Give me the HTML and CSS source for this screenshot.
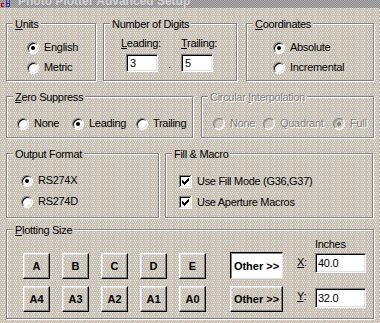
FILE: index.html
```html
<!DOCTYPE html>
<html>
<head>
<meta charset="utf-8">
<title>Photo Plotter Advanced Setup</title>
<link rel="stylesheet" href="styles.css">
</head>
<body>
<div class="titlebar">
  <svg class="appicon" width="10" height="8" viewBox="0 0 10 8">
    <path d="M0 3h3v1H1v2h2v1H0z" fill="#c00000"/>
    <path d="M5 0h1v6h2V0h1v7H5z" fill="#2040c0"/>
    <path d="M6 3h2v1H6z" fill="#c00000"/>
  </svg>
  <span class="title">Photo Plotter Advanced Setup</span>
</div>

<div class="dialog">
  <div class="row">
    <div class="group g-units">
      <span class="legend"><u>U</u>nits</span>
      <div class="opts">
        <div class="opt"><span class="radio on"></span><span>English</span></div>
        <div class="opt"><span class="radio"></span><span>Metric</span></div>
      </div>
    </div>
    <div class="group g-digits">
      <span class="legend">Number of Digits</span>
      <div class="digits">
        <div class="dcol dcol1"><span class="dlabel"><u>L</u>eading:</span><div class="field f-digit">3</div></div>
        <span class="dot">.</span>
        <div class="dcol"><span class="dlabel"><u>T</u>railing:</span><div class="field f-digit">5</div></div>
      </div>
    </div>
    <div class="group g-coords">
      <span class="legend"><u>C</u>oordinates</span>
      <div class="opts">
        <div class="opt"><span class="radio on"></span><span>Absolute</span></div>
        <div class="opt"><span class="radio"></span><span>Incremental</span></div>
      </div>
    </div>
  </div>

  <div class="row row2">
    <div class="group g-zero">
      <span class="legend"><u>Z</u>ero Suppress</span>
      <div class="hopts zero-opts">
        <div class="opt"><span class="radio"></span><span>None</span></div>
        <div class="opt"><span class="radio on"></span><span>Leading</span></div>
        <div class="opt"><span class="radio"></span><span>Trailing</span></div>
      </div>
    </div>
    <div class="group g-circ disabled">
      <span class="legend">Circular <u>I</u>nterpolation</span>
      <div class="hopts circ-opts">
        <div class="opt"><span class="radio off"></span><span>None</span></div>
        <div class="opt"><span class="radio off"></span><span>Quadrant</span></div>
        <div class="opt"><span class="radio off on"></span><span>Full</span></div>
      </div>
    </div>
  </div>

  <div class="row row3">
    <div class="group g-output">
      <span class="legend">Output Format</span>
      <div class="opts">
        <div class="opt"><span class="radio on"></span><span>RS274X</span></div>
        <div class="opt"><span class="radio"></span><span>RS274D</span></div>
      </div>
    </div>
    <div class="group g-fill">
      <span class="legend">Fill &amp; Macro</span>
      <div class="opts">
        <div class="opt check-opt">
          <svg class="check" width="13" height="13" viewBox="0 0 13 13">
            <rect width="13" height="13" fill="#fff"/>
            <path d="M0 0h12v1H1v11H0z" fill="#808080"/>
            <path d="M1 1h10v1H2v9H1z" fill="#000"/>
            <path d="M11 1h1v11H1v-1h10z" fill="#dfdfdf"/>
            <path d="M9 3h1v1H9zM8 4h2v1H8zM3 5h1v1H3zM7 5h3v1H7zM3 6h2v1H3zM6 6h3v1H6zM3 7h5v1H3zM4 8h3v1H4zM5 9h1v1H5z" fill="#000"/>
          </svg>
          <span>Use Fill Mode (G36,G37)</span>
        </div>
        <div class="opt check-opt">
          <svg class="check" width="13" height="13" viewBox="0 0 13 13">
            <rect width="13" height="13" fill="#fff"/>
            <path d="M0 0h12v1H1v11H0z" fill="#808080"/>
            <path d="M1 1h10v1H2v9H1z" fill="#000"/>
            <path d="M11 1h1v11H1v-1h10z" fill="#dfdfdf"/>
            <path d="M9 3h1v1H9zM8 4h2v1H8zM3 5h1v1H3zM7 5h3v1H7zM3 6h2v1H3zM6 6h3v1H6zM3 7h5v1H3zM4 8h3v1H4zM5 9h1v1H5z" fill="#000"/>
          </svg>
          <span>Use Aperture Macros</span>
        </div>
      </div>
    </div>
  </div>

  <div class="row row4">
    <div class="group g-plot">
      <span class="legend"><u>P</u>lotting Size</span>
      <div class="plot">
        <div class="sizes">
          <div class="btn">A</div>
          <div class="btn">B</div>
          <div class="btn">C</div>
          <div class="btn">D</div>
          <div class="btn">E</div>
          <div class="btn">A4</div>
          <div class="btn">A3</div>
          <div class="btn">A2</div>
          <div class="btn">A1</div>
          <div class="btn">A0</div>
        </div>
        <div class="others">
          <div class="btn btn-other btn-pressed">Other &gt;&gt;</div>
          <div class="btn btn-other">Other &gt;&gt;</div>
        </div>
        <div class="coords">
          <span class="inches">Inches</span>
          <span class="clabel"><u>X</u>:</span>
          <div class="field f-coord f-x">40.0</div>
          <span class="clabel clabel-y"><u>Y</u>:</span>
          <div class="field f-coord f-y">32.0</div>
        </div>
      </div>
    </div>
  </div>
</div>
</body>
</html>
```
FILE: styles.css
```css
:root {
  --dither:
    conic-gradient(at 1px 1px, #0000 75%, #f2c6d2 0) 0 0 / 6px 4px,
    conic-gradient(at 1px 1px, #0000 75%, #eeeeb4 0) 2px 0 / 6px 4px,
    conic-gradient(at 1px 1px, #0000 75%, #f4f4f0 0) 4px 0 / 6px 4px,
    conic-gradient(at 1px 1px, #0000 75%, #eeeeb4 0) 1px 2px / 6px 4px,
    conic-gradient(at 1px 1px, #0000 75%, #f4f4f0 0) 3px 2px / 6px 4px,
    conic-gradient(at 1px 1px, #0000 75%, #f2c6d2 0) 5px 2px / 6px 4px,
    #c4c0b8;
}

html, body {
  margin: 0;
  padding: 0;
}

body {
  width: 380px;
  height: 323px;
  overflow: hidden;
  background: var(--dither);
  background-attachment: fixed;
  font-family: "Liberation Sans", Arial, sans-serif;
  font-size: 11px;
  line-height: 13px;
  letter-spacing: -0.3px;
  color: #000;
}

/* ---------- title bar ---------- */
.titlebar {
  display: flex;
  height: 8px;
  overflow: hidden;
  background: conic-gradient(#8c8c8c 25%, #acacac 0 50%, #8c8c8c 0 75%, #acacac 0) 0 0 / 2px 2px;
}
.appicon {
  flex: none;
  margin-left: 1px;
}
.title {
  margin: -5px 0 0 7px;
  font-weight: bold;
  font-size: 12px;
  line-height: 12px;
  letter-spacing: 0;
  color: #d0d0d0;
  white-space: nowrap;
}

/* ---------- layout ---------- */
.dialog {
  padding: 15px 0 0 6px;
}
.row {
  display: flex;
  align-items: flex-start;
}
.row2 { margin-top: 15px; }
.row3 { margin-top: 15px; }
.row4 { margin-top: 11px; }

/* ---------- group boxes ---------- */
.group {
  position: relative;
  box-sizing: border-box;
  border: 1px solid #808080;
  box-shadow: inset 1px 1px 0 #fff, 1px 1px 0 #fff;
  flex: none;
}
.legend {
  position: absolute;
  top: -6px;
  left: 6px;
  padding: 0 2px;
  line-height: 13px;
  white-space: nowrap;
  background: var(--dither);
  background-attachment: fixed;
}
.disabled .legend {
  color: #808080;
  text-shadow: 1px 1px 0 #fff;
}

.g-units  { width: 90px;  height: 58px; padding: 17px 0 0 20px; }
.g-digits { width: 134px; height: 58px; padding: 13px 0 0 17px; margin-left: 7px; }
.g-coords { width: 128px; height: 58px; padding: 17px 0 0 26px; margin-left: 9px; }
.g-zero   { width: 187px; height: 42px; padding: 20px 0 0 10px; }
.g-circ   { width: 173px; height: 42px; padding: 20px 0 0 11px; margin-left: 8px; }
.g-output { width: 153px; height: 65px; padding: 20px 0 0 14px; }
.g-fill   { width: 208px; height: 65px; padding: 21px 0 0 13px; margin-left: 6px; }
.g-plot   { width: 368px; height: 90px; padding: 8px 0 0 16px; }

/* ---------- options ---------- */
.opts {
  display: flex;
  flex-direction: column;
  gap: 7px;
}
.g-output .opts,
.g-fill .opts { gap: 8px; }

.opt {
  display: flex;
  align-items: center;
  gap: 5px;
  height: 13px;
  white-space: nowrap;
}
.hopts {
  display: grid;
}
.zero-opts { grid-template-columns: 55px 64px auto; }
.circ-opts { grid-template-columns: 50px 70px auto; }
.disabled .opt {
  color: #808080;
  text-shadow: 1px 1px 0 #fff;
}

.radio {
  position: relative;
  flex: none;
  box-sizing: border-box;
  width: 12px;
  height: 12px;
  border-radius: 50%;
  border: 1px solid;
  border-color: #808080 #fff #fff #808080;
  background: #fff;
  box-shadow: inset 1px 1px 0 #000, inset -1px -1px 0 #dfdfdf;
}
.radio.on::after {
  content: "";
  position: absolute;
  left: 3px;
  top: 3px;
  width: 4px;
  height: 4px;
  border-radius: 50%;
  background: #000;
}
.radio.off {
  background: transparent;
  box-shadow: inset 1px 1px 0 #a8a8a8, inset -1px -1px 0 #dfdfdf;
}
.radio.off.on::after {
  background: #808080;
}

.check {
  flex: none;
  display: block;
}

/* ---------- digits ---------- */
.digits {
  display: flex;
  align-items: flex-end;
}
.dcol {
  display: flex;
  flex-direction: column;
  gap: 4px;
  white-space: nowrap;
}
.dcol1 { width: 37px; }
.dcol1 .field { margin-left: 5px; }
.dot {
  width: 23px;
  text-align: center;
  margin-bottom: 1px;
}

/* ---------- edit fields ---------- */
.field {
  box-sizing: border-box;
  border: 1px solid;
  border-color: #808080 #fff #fff #808080;
  box-shadow: inset 1px 1px 0 #000, inset -1px -1px 0 #dfdfdf;
  background: #fff;
  white-space: nowrap;
}
.f-digit {
  width: 32px;
  height: 18px;
  padding: 1px 3px;
  line-height: 14px;
}
.f-coord {
  width: 51px;
  height: 20px;
  padding: 1px 2px;
  line-height: 16px;
}

/* ---------- buttons ---------- */
.btn {
  box-sizing: border-box;
  display: flex;
  align-items: center;
  justify-content: center;
  width: 27px;
  height: 26px;
  border: 1px solid;
  border-color: #fff #000 #000 #fff;
  box-shadow: inset -1px -1px 0 #808080, inset 1px 1px 0 #dfdfdf;
  background: var(--dither);
  background-attachment: fixed;
  font-weight: bold;
  letter-spacing: 0;
  white-space: nowrap;
}
.btn-other {
  width: 53px;
}
.btn-pressed {
  height: 27px;
  border-color: #000 #dfdfdf #dfdfdf #000;
  box-shadow: inset 1px 1px 0 #808080;
  background: #fff;
  padding-top: 2px;
}

.plot {
  display: flex;
  align-items: flex-start;
}
.sizes {
  display: grid;
  grid-template-columns: repeat(5, 27px);
  column-gap: 12px;
  row-gap: 7px;
  margin-top: 15px;
}
.others {
  display: flex;
  flex-direction: column;
  gap: 7px;
  margin: 14px 0 0 24px;
}
.coords {
  display: grid;
  grid-template-columns: 18px 51px;
  align-items: center;
  margin-left: 14px;
}
.inches {
  grid-column: 2;
}
.f-x { margin-top: 2px; }
.f-y { margin-top: 15px; }
.clabel {
  align-self: end;
  margin-bottom: 4px;
}
.clabel-y {
  margin-bottom: 5px;
}
```
